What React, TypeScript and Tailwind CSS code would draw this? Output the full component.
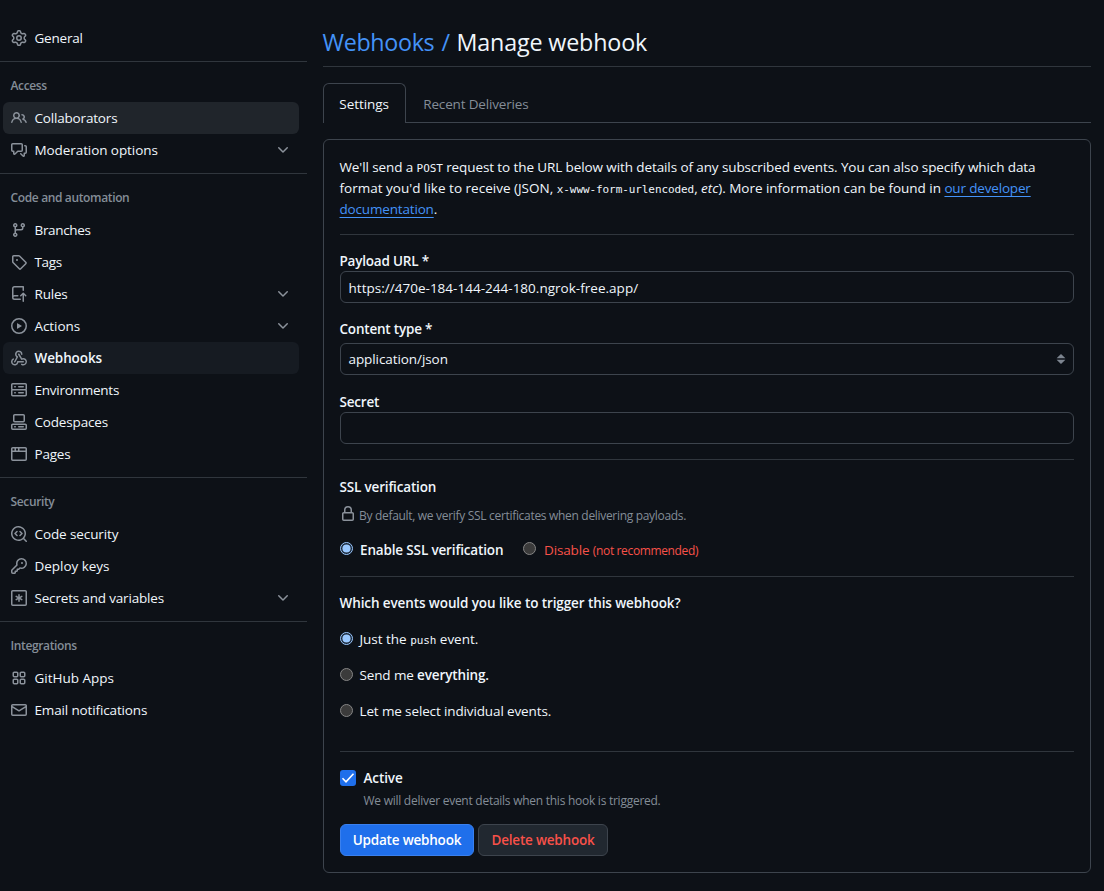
import React from "react";

const icons = {
  gear: "M8 0a8.2 8.2 0 0 1 .701.031C9.444.095 9.99.645 10.16 1.29l.288 1.107c.018.066.079.158.212.224.231.114.454.243.668.386.123.082.233.09.299.071l1.103-.303c.644-.176 1.392.021 1.82.63.27.385.506.792.704 1.218.315.675.111 1.422-.364 1.891l-.814.806c-.049.048-.098.147-.088.294.016.257.016.515 0 .772-.01.147.038.246.088.294l.814.806c.475.469.679 1.216.364 1.891a7.977 7.977 0 0 1-.704 1.217c-.428.61-1.176.807-1.82.63l-1.102-.302c-.067-.019-.177-.011-.3.071a5.909 5.909 0 0 1-.668.386c-.133.066-.194.158-.211.224l-.29 1.106c-.168.646-.715 1.196-1.458 1.26a8.006 8.006 0 0 1-1.402 0c-.743-.064-1.289-.614-1.458-1.26l-.289-1.106c-.018-.066-.079-.158-.212-.224a5.738 5.738 0 0 1-.668-.386c-.123-.082-.233-.09-.299-.071l-1.103.303c-.644.176-1.392-.021-1.82-.63a8.12 8.12 0 0 1-.704-1.218c-.315-.675-.111-1.422.363-1.891l.815-.806c.05-.048.098-.147.088-.294a6.214 6.214 0 0 1 0-.772c.01-.147-.038-.246-.088-.294l-.815-.806C.635 6.045.431 5.298.746 4.623a7.92 7.92 0 0 1 .704-1.217c.428-.61 1.176-.807 1.82-.63l1.102.302c.067.019.177.011.3-.071.214-.143.437-.272.668-.386.133-.066.194-.158.211-.224l.29-1.106C6.009.645 6.556.095 7.299.03 7.53.01 7.764 0 8 0Zm-.571 1.525c-.036.003-.108.036-.137.146l-.289 1.105c-.147.561-.549.967-.998 1.189-.173.086-.34.183-.5.29-.417.278-.97.423-1.529.27l-1.103-.303c-.109-.03-.175.016-.195.045-.22.312-.412.644-.573.99-.014.031-.021.11.059.19l.815.806c.411.406.562.957.53 1.456a4.709 4.709 0 0 0 0 .582c.032.499-.119 1.05-.53 1.456l-.815.806c-.081.08-.073.159-.059.19.162.346.353.677.573.989.02.03.085.076.195.046l1.102-.303c.56-.153 1.113-.008 1.53.27.161.107.328.204.501.29.447.222.85.629.997 1.189l.289 1.105c.029.109.101.143.137.146a6.6 6.6 0 0 0 1.142 0c.036-.003.108-.036.137-.146l.289-1.105c.147-.561.549-.967.998-1.189.173-.086.34-.183.5-.29.417-.278.97-.423 1.529-.27l1.103.303c.109.029.175-.016.195-.045.22-.313.411-.644.573-.99.014-.031.021-.11-.059-.19l-.815-.806c-.411-.406-.562-.957-.53-1.456a4.709 4.709 0 0 0 0-.582c-.032-.499.119-1.05.53-1.456l.815-.806c.081-.08.073-.159.059-.19a6.464 6.464 0 0 0-.573-.989c-.02-.03-.085-.076-.195-.046l-1.102.303c-.56.153-1.113.008-1.53-.27a4.44 4.44 0 0 0-.501-.29c-.447-.222-.85-.629-.997-1.189l-.289-1.105c-.029-.11-.101-.143-.137-.146a6.6 6.6 0 0 0-1.142 0ZM11 8a3 3 0 1 1-6 0 3 3 0 0 1 6 0ZM9.5 8a1.5 1.5 0 1 0-3.001.001A1.5 1.5 0 0 0 9.5 8Z",
  people:
    "M2 5.5a3.5 3.5 0 1 1 5.898 2.549 5.508 5.508 0 0 1 3.034 4.084.75.75 0 1 1-1.482.235 4 4 0 0 0-7.9 0 .75.75 0 0 1-1.482-.236A5.507 5.507 0 0 1 3.102 8.05 3.493 3.493 0 0 1 2 5.5ZM11 4a3.001 3.001 0 0 1 2.22 5.018 5.01 5.01 0 0 1 2.56 3.012.749.749 0 0 1-.885.954.752.752 0 0 1-.549-.514 3.507 3.507 0 0 0-2.522-2.372.75.75 0 0 1-.574-.73v-.352a.75.75 0 0 1 .416-.672A1.5 1.5 0 0 0 11 5.5.75.75 0 0 1 11 4Zm-5.5-.5a2 2 0 1 0-.001 3.999A2 2 0 0 0 5.5 3.5Z",
  discussion:
    "M1.75 1h8.5c.966 0 1.75.784 1.75 1.75v5.5A1.75 1.75 0 0 1 10.25 10H7.061l-2.574 2.573A1.458 1.458 0 0 1 2 11.543V10h-.25A1.75 1.75 0 0 1 0 8.25v-5.5C0 1.784.784 1 1.75 1ZM1.5 2.75v5.5c0 .138.112.25.25.25h1a.75.75 0 0 1 .75.75v2.19l2.72-2.72a.749.749 0 0 1 .53-.22h3.5a.25.25 0 0 0 .25-.25v-5.5a.25.25 0 0 0-.25-.25h-8.5a.25.25 0 0 0-.25.25Zm13 2a.25.25 0 0 0-.25-.25h-.5a.75.75 0 0 1 0-1.5h.5c.966 0 1.75.784 1.75 1.75v5.5A1.75 1.75 0 0 1 14.25 12H14v1.543a1.458 1.458 0 0 1-2.487 1.03L9.22 12.28a.749.749 0 0 1 .326-1.275.749.749 0 0 1 .734.215l2.22 2.22v-2.19a.75.75 0 0 1 .75-.75h1a.25.25 0 0 0 .25-.25Z",
  branch:
    "M9.5 3.25a2.25 2.25 0 1 1 3 2.122V6A2.5 2.5 0 0 1 10 8.5H6a1 1 0 0 0-1 1v1.128a2.251 2.251 0 1 1-1.5 0V5.372a2.25 2.25 0 1 1 1.5 0v1.836A2.493 2.493 0 0 1 6 7h4a1 1 0 0 0 1-1v-.628A2.25 2.25 0 0 1 9.5 3.25Zm-6 0a.75.75 0 1 0 1.5 0 .75.75 0 0 0-1.5 0Zm8.25-.75a.75.75 0 1 0 0 1.5.75.75 0 0 0 0-1.5ZM4.25 12a.75.75 0 1 0 0 1.5.75.75 0 0 0 0-1.5Z",
  tag: "M1 7.775V2.75C1 1.784 1.784 1 2.75 1h5.025c.464 0 .91.184 1.238.513l6.25 6.25a1.75 1.75 0 0 1 0 2.474l-5.026 5.026a1.75 1.75 0 0 1-2.474 0l-6.25-6.25A1.752 1.752 0 0 1 1 7.775Zm1.5 0c0 .066.026.13.073.177l6.25 6.25a.25.25 0 0 0 .354 0l5.025-5.025a.25.25 0 0 0 0-.354l-6.25-6.25a.25.25 0 0 0-.177-.073H2.75a.25.25 0 0 0-.25.25ZM6 5a1 1 0 1 1 0 2 1 1 0 0 1 0-2Z",
  rules:
    "M1 2.5A2.5 2.5 0 0 1 3.5 0h8.75a.75.75 0 0 1 .75.75v3.5a.75.75 0 0 1-1.5 0V1.5h-8a1 1 0 0 0-1 1v6.708A2.493 2.493 0 0 1 3.5 9h3.25a.75.75 0 0 1 0 1.5H3.5a1 1 0 0 0 0 2h5.75a.75.75 0 0 1 0 1.5H3.5A2.5 2.5 0 0 1 1 11.5Zm13.23 7.79-.001-.001-1.224-1.224v6.184a.75.75 0 0 1-1.5 0V9.066L10.28 10.29a.75.75 0 0 1-1.06-1.061l2.505-2.504a.75.75 0 0 1 1.06 0L15.29 9.23a.751.751 0 0 1-.018 1.042.751.751 0 0 1-1.042.018Z",
  play: "M8 0a8 8 0 1 1 0 16A8 8 0 0 1 8 0ZM1.5 8a6.5 6.5 0 1 0 13 0 6.5 6.5 0 0 0-13 0Zm4.879-2.773 4.264 2.559a.25.25 0 0 1 0 .428l-4.264 2.559A.25.25 0 0 1 6 10.559V5.442a.25.25 0 0 1 .379-.215Z",
  webhook:
    "M5.5 4.25a2.25 2.25 0 0 1 4.5 0 .75.75 0 0 0 1.5 0 3.75 3.75 0 1 0-6.14 2.889l-2.272 4.258a.75.75 0 0 0 1.324.706L7 7.25a.75.75 0 0 0-.309-1.015A2.25 2.25 0 0 1 5.5 4.25Z M7.364 3.607a.75.75 0 0 1 1.03.257l2.608 4.349a3.75 3.75 0 1 1-.628 6.785.75.75 0 0 1 .752-1.299 2.25 2.25 0 1 0-.033-3.88.75.75 0 0 1-1.03-.256L7.107 4.636a.75.75 0 0 1 .257-1.03Z M2.9 8.776A.75.75 0 0 1 2.625 9.8 2.25 2.25 0 1 0 6 11.75a.75.75 0 0 1 .75-.751h5.5a.75.75 0 0 1 0 1.5H7.425a3.751 3.751 0 1 1-5.55-3.998.75.75 0 0 1 1.024.274Z",
  server:
    "M1.75 1h12.5c.966 0 1.75.784 1.75 1.75v4c0 .372-.116.717-.314 1 .198.283.314.628.314 1v4a1.75 1.75 0 0 1-1.75 1.75H1.75A1.75 1.75 0 0 1 0 12.75v-4c0-.358.109-.707.314-1a1.739 1.739 0 0 1-.314-1v-4C0 1.784.784 1 1.75 1ZM1.5 2.75v4c0 .138.112.25.25.25h12.5a.25.25 0 0 0 .25-.25v-4a.25.25 0 0 0-.25-.25H1.75a.25.25 0 0 0-.25.25Zm.25 5.75a.25.25 0 0 0-.25.25v4c0 .138.112.25.25.25h12.5a.25.25 0 0 0 .25-.25v-4a.25.25 0 0 0-.25-.25ZM7 4.75A.75.75 0 0 1 7.75 4h4.5a.75.75 0 0 1 0 1.5h-4.5A.75.75 0 0 1 7 4.75ZM7.75 10h4.5a.75.75 0 0 1 0 1.5h-4.5a.75.75 0 0 1 0-1.5ZM3 4.75A.75.75 0 0 1 3.75 4h.5a.75.75 0 0 1 0 1.5h-.5A.75.75 0 0 1 3 4.75ZM3.75 10h.5a.75.75 0 0 1 0 1.5h-.5a.75.75 0 0 1 0-1.5Z",
  codespaces:
    "M0 11.25c0-.966.784-1.75 1.75-1.75h12.5c.966 0 1.75.784 1.75 1.75v3A1.75 1.75 0 0 1 14.25 16H1.75A1.75 1.75 0 0 1 0 14.25Zm2-9.5C2 .784 2.784 0 3.75 0h8.5C13.216 0 14 .784 14 1.75v5a1.75 1.75 0 0 1-1.75 1.75h-8.5A1.75 1.75 0 0 1 2 6.75Zm1.75-.25a.25.25 0 0 0-.25.25v5c0 .138.112.25.25.25h8.5a.25.25 0 0 0 .25-.25v-5a.25.25 0 0 0-.25-.25Zm-2 9.5a.25.25 0 0 0-.25.25v3c0 .138.112.25.25.25h12.5a.25.25 0 0 0 .25-.25v-3a.25.25 0 0 0-.25-.25Z M7 12.75a.75.75 0 0 1 .75-.75h4.5a.75.75 0 0 1 0 1.5h-4.5a.75.75 0 0 1-.75-.75Zm-4 0a.75.75 0 0 1 .75-.75h.5a.75.75 0 0 1 0 1.5h-.5a.75.75 0 0 1-.75-.75Z",
  browser:
    "M0 2.75C0 1.784.784 1 1.75 1h12.5c.966 0 1.75.784 1.75 1.75v10.5A1.75 1.75 0 0 1 14.25 15H1.75A1.75 1.75 0 0 1 0 13.25ZM14.5 6h-13v7.25c0 .138.112.25.25.25h12.5a.25.25 0 0 0 .25-.25Zm-6-3.5v2h6V2.75a.25.25 0 0 0-.25-.25ZM5 2.5v2h2v-2Zm-3.25 0a.25.25 0 0 0-.25.25V4.5h2v-2Z",
  codescan:
    "M8.47 4.97a.75.75 0 0 0 0 1.06L9.94 7.5 8.47 8.97a.75.75 0 1 0 1.06 1.06l2-2a.75.75 0 0 0 0-1.06l-2-2a.75.75 0 0 0-1.06 0ZM6.53 6.03a.75.75 0 0 0-1.06-1.06l-2 2a.75.75 0 0 0 0 1.06l2 2a.75.75 0 1 0 1.06-1.06L5.06 7.5l1.47-1.47Z M12.246 13.307a7.501 7.501 0 1 1 1.06-1.06l2.474 2.473a.75.75 0 1 1-1.06 1.06l-2.474-2.473ZM1.5 7.5a6.002 6.002 0 0 0 3.608 5.504 6.002 6.002 0 0 0 6.486-1.117.748.748 0 0 1 .292-.293A6 6 0 1 0 1.5 7.5Z",
  key: "M10.5 0a5.499 5.499 0 1 1-1.288 10.848l-.932.932a.749.749 0 0 1-.53.22H7v.75a.749.749 0 0 1-.22.53l-.5.5a.749.749 0 0 1-.53.22H5v.75a.749.749 0 0 1-.22.53l-.5.5a.749.749 0 0 1-.53.22h-2A1.75 1.75 0 0 1 0 14.25v-2c0-.199.079-.389.22-.53l4.932-4.932A5.5 5.5 0 0 1 10.5 0Zm-4 5.5c-.001.431.069.86.205 1.269a.75.75 0 0 1-.181.768L1.5 12.56v1.69c0 .138.112.25.25.25h1.69l.06-.06v-1.19a.75.75 0 0 1 .75-.75h1.19l.06-.06v-1.19a.75.75 0 0 1 .75-.75h1.19l1.023-1.025a.75.75 0 0 1 .768-.18A4 4 0 1 0 6.5 5.5ZM11 6a1 1 0 1 1 0-2 1 1 0 0 1 0 2Z",
  asterisk:
    "M1.75 0h12.5C15.216 0 16 .784 16 1.75v12.5A1.75 1.75 0 0 1 14.25 16H1.75A1.75 1.75 0 0 1 0 14.25V1.75C0 .784.784 0 1.75 0ZM1.5 1.75v12.5c0 .138.112.25.25.25h12.5a.25.25 0 0 0 .25-.25V1.75a.25.25 0 0 0-.25-.25H1.75a.25.25 0 0 0-.25.25Z M8 4a.75.75 0 0 1 .75.75V6.7l1.69-.975a.75.75 0 0 1 .75 1.3L9.5 8l1.69.976a.75.75 0 0 1-.75 1.298L8.75 9.3v1.951a.75.75 0 0 1-1.5 0V9.299l-1.69.976a.75.75 0 0 1-.75-1.3L6.5 8l-1.69-.975a.75.75 0 0 1 .75-1.3l1.69.976V4.75A.75.75 0 0 1 8 4Z",
  apps: "M1.5 3.25c0-.966.784-1.75 1.75-1.75h2.5c.966 0 1.75.784 1.75 1.75v2.5A1.75 1.75 0 0 1 5.75 7.5h-2.5A1.75 1.75 0 0 1 1.5 5.75Zm7 0c0-.966.784-1.75 1.75-1.75h2.5c.966 0 1.75.784 1.75 1.75v2.5a1.75 1.75 0 0 1-1.75 1.75h-2.5A1.75 1.75 0 0 1 8.5 5.75Zm-7 7c0-.966.784-1.75 1.75-1.75h2.5c.966 0 1.75.784 1.75 1.75v2.5a1.75 1.75 0 0 1-1.75 1.75h-2.5a1.75 1.75 0 0 1-1.75-1.75Zm7 0c0-.966.784-1.75 1.75-1.75h2.5c.966 0 1.75.784 1.75 1.75v2.5a1.75 1.75 0 0 1-1.75 1.75h-2.5a1.75 1.75 0 0 1-1.75-1.75ZM3.25 3a.25.25 0 0 0-.25.25v2.5c0 .138.112.25.25.25h2.5A.25.25 0 0 0 6 5.75v-2.5A.25.25 0 0 0 5.75 3Zm7 0a.25.25 0 0 0-.25.25v2.5c0 .138.112.25.25.25h2.5a.25.25 0 0 0 .25-.25v-2.5a.25.25 0 0 0-.25-.25Zm-7 7a.25.25 0 0 0-.25.25v2.5c0 .138.112.25.25.25h2.5a.25.25 0 0 0 .25-.25v-2.5a.25.25 0 0 0-.25-.25Zm7 0a.25.25 0 0 0-.25.25v2.5c0 .138.112.25.25.25h2.5a.25.25 0 0 0 .25-.25v-2.5a.25.25 0 0 0-.25-.25Z",
  mail: "M1.75 2h12.5c.966 0 1.75.784 1.75 1.75v8.5A1.75 1.75 0 0 1 14.25 14H1.75A1.75 1.75 0 0 1 0 12.25v-8.5C0 2.784.784 2 1.75 2ZM1.5 12.251c0 .138.112.25.25.25h12.5a.25.25 0 0 0 .25-.25V5.809L8.38 9.397a.75.75 0 0 1-.76 0L1.5 5.809v6.442Zm13-8.181v-.32a.25.25 0 0 0-.25-.25H1.75a.25.25 0 0 0-.25.25v.32L8 7.88Z",
  lock: "M4 4a4 4 0 0 1 8 0v2h.25c.966 0 1.75.784 1.75 1.75v5.5A1.75 1.75 0 0 1 12.25 15h-8.5A1.75 1.75 0 0 1 2 13.25v-5.5C2 6.784 2.784 6 3.75 6H4Zm8.25 3.5h-8.5a.25.25 0 0 0-.25.25v5.5c0 .138.112.25.25.25h8.5a.25.25 0 0 0 .25-.25v-5.5a.25.25 0 0 0-.25-.25ZM10.5 6V4a2.5 2.5 0 1 0-5 0v2Z",
  chevron:
    "M12.78 5.22a.749.749 0 0 1 0 1.06l-4.25 4.25a.749.749 0 0 1-1.06 0L3.22 6.28a.749.749 0 1 1 1.06-1.06L8 8.939l3.72-3.719a.749.749 0 0 1 1.06 0Z",
};

type IconName = keyof typeof icons;

function Icon({ name }: { name: IconName }) {
  return (
    <svg viewBox="0 0 16 16" className="size-4 shrink-0 fill-[#8b929b]">
      <path fillRule="evenodd" d={icons[name]} />
    </svg>
  );
}

type Item = {
  icon: IconName;
  label: string;
  track: string;
  expandable?: boolean;
  state?: "hover" | "current";
};

const groups: { title?: string; items: Item[] }[] = [
  { items: [{ icon: "gear", label: "General", track: "tracking-[-0.2px]" }] },
  {
    title: "Access",
    items: [
      { icon: "people", label: "Collaborators", track: "tracking-[-0.18px]", state: "hover" },
      { icon: "discussion", label: "Moderation options", track: "tracking-[-0.08px]", expandable: true },
    ],
  },
  {
    title: "Code and automation",
    items: [
      { icon: "branch", label: "Branches", track: "tracking-[-0.33px]" },
      { icon: "tag", label: "Tags", track: "tracking-[-0.35px]" },
      { icon: "rules", label: "Rules", track: "tracking-[-0.2px]", expandable: true },
      { icon: "play", label: "Actions", track: "tracking-[-0.08px]", expandable: true },
      { icon: "webhook", label: "Webhooks", track: "tracking-[-0.1px]", state: "current" },
      { icon: "server", label: "Environments", track: "tracking-[-0.24px]" },
      { icon: "codespaces", label: "Codespaces", track: "tracking-[-0.17px]" },
      { icon: "browser", label: "Pages", track: "tracking-[-0.2px]" },
    ],
  },
  {
    title: "Security",
    items: [
      { icon: "codescan", label: "Code security", track: "tracking-[-0.1px]" },
      { icon: "key", label: "Deploy keys", track: "tracking-[-0.04px]" },
      { icon: "asterisk", label: "Secrets and variables", track: "tracking-[-0.18px]", expandable: true },
    ],
  },
  {
    title: "Integrations",
    items: [
      { icon: "apps", label: "GitHub Apps", track: "tracking-[0px]" },
      { icon: "mail", label: "Email notifications", track: "tracking-[-0.14px]" },
    ],
  },
];

function Sidebar() {
  return (
    <nav className="w-[307px] shrink-0 pt-[22px]">
      {groups.map((group, i) => (
        <section key={i} className={i > 0 ? "mt-[7px] border-t border-[#30363d]" : ""}>
          {group.title && (
            <h2 className="flex h-10 items-center pt-1.5 pl-[10.5px] text-[12px] font-semibold tracking-[-0.36px] text-[#848d97]">
              {group.title}
            </h2>
          )}
          <ul className="pr-2 pl-[3px]">
            {group.items.map((item) => (
              <li
                key={item.label}
                className={`flex h-8 items-center rounded-md px-2 ${
                  item.state === "hover" ? "bg-[#20252b]" : item.state === "current" ? "bg-[#161b22]" : ""
                }`}
              >
                <Icon name={item.icon} />
                <span className={`ml-[7.5px] flex-1 ${item.state === "current" ? "font-semibold" : ""} ${item.track}`}>
                  {item.label}
                </span>
                {item.expandable && <Icon name="chevron" />}
              </li>
            ))}
          </ul>
        </section>
      ))}
    </nav>
  );
}

function Radio({ checked = false }: { checked?: boolean }) {
  return checked ? (
    <svg viewBox="0 0 13 13" className="-mt-[3px] size-[13px] shrink-0">
      <circle cx="6.5" cy="6.5" r="6" className="fill-[#1b2838] stroke-[#99c8ff]" />
      <circle cx="6.5" cy="6.5" r="4.1" className="fill-[#99c8ff]" />
    </svg>
  ) : (
    <span className="-mt-[3px] size-[13px] shrink-0 rounded-full border border-[#858585] bg-[#3b3b3b]" />
  );
}

function Mono({ children }: { children: React.ReactNode }) {
  return (
    <code className="font-['DejaVu_Sans_Mono','Liberation_Mono',monospace] text-[11px] leading-none tracking-[-0.08px]">
      {children}
    </code>
  );
}

const field = "flex h-8 items-center rounded-md border border-[#3d444d] px-[7.5px]";
const link = "text-[#4493f8] tracking-[-0.17px] underline underline-offset-[3px]";

export default function App() {
  return (
    <div className="flex h-[891px] w-[1104px] overflow-hidden bg-[#0d1117] font-['Open_Sans','Noto_Sans',sans-serif] text-[13.5px] leading-[21px] whitespace-nowrap text-[#f0f6fc]">
      <Sidebar />
      <main className="ml-4 w-[768px] pt-[22px]">
        <h1 className="flex h-[45px] items-center border-b border-[#30363d] pb-1 text-[23.3px]">
          <span className="-ml-[0.5px] tracking-[-0.33px] text-[#4493f8]">Webhooks</span>
          <span className="ml-[7px] text-[#4493f8]">/</span>
          <span className="ml-[6.5px] tracking-[-0.15px]">Manage webhook</span>
        </h1>

        <div className="mt-4 flex h-10">
          <div className="flex w-[83px] items-center rounded-t-md border border-b-0 border-[#3d444d] pt-[2px] pl-[15.3px] tracking-[-0.05px]">
            Settings
          </div>
          <div className="flex flex-1 items-center border-b border-[#3d444d] pt-[3px] pl-[17.3px] tracking-[-0.17px] text-[#848d97]">
            Recent Deliveries
          </div>
        </div>

        <form className="mt-4 h-[734px] rounded-md border border-[#3d444d] px-4 pt-[17px]">
          <div className="h-[78px] border-b border-[#30363d]">
            <div className="-ml-[0.5px] tracking-[-0.1px]">
              <p>
                We'll send a <Mono>POST</Mono> request to the URL below with details of any subscribed events. You can also specify which data
              </p>
              <p>
                <span className="tracking-[0.01px]">format you'd like to receive (JSON, </span>
                <Mono>x-www-form-urlencoded</Mono>
                <span className="tracking-[-0.03px]">
                  , <em>etc</em>). More information can be found in{" "}
                </span>
                <a className={link}>our developer</a>
              </p>
              <p>
                <a className={link}>documentation</a>.
              </p>
            </div>
          </div>

          <div className="h-[225px] border-b border-[#30363d] pt-4">
            <label className="-ml-[0.5px] block h-5 font-semibold tracking-[-0.2px]">Payload URL *</label>
            <div className={field}>
              <span className="pt-[2px] tracking-[0.02px]">https://470e-184-144-244-180.ngrok-free.app/</span>
            </div>
            <label className="mt-4 -ml-[0.5px] block h-6 font-semibold tracking-[-0.2px]">Content type *</label>
            <div className={`${field} justify-between`}>
              <span className="tracking-[-0.08px]">application/json</span>
              <svg viewBox="0 0 10 10" className="mr-[-0.5px] size-[10px] fill-[#7d8590]">
                <path d="M5 0 9.4 4.2H.6ZM.6 5.8h8.8L5 10Z" />
              </svg>
            </div>
            <label className="mt-[17px] -ml-[0.5px] block h-5 font-semibold tracking-[-0.2px]">Secret</label>
            <div className={field} />
          </div>

          <div className="h-[117px] border-b border-[#30363d] pt-[17px]">
            <h3 className="-ml-[0.5px] font-semibold tracking-[-0.17px]">SSL verification</h3>
            <p className="mt-[6px] flex h-[21px] items-center text-[12px] tracking-[-0.31px] text-[#848d97]">
              <span className="-mt-[2px]">
                <Icon name="lock" />
              </span>
              <span className="ml-[3px] pt-px">By default, we verify SSL certificates when delivering payloads.</span>
            </p>
            <div className="mt-[15px] flex h-[21px] items-center">
              <span className="-mt-px flex">
                <Radio checked />
              </span>
              <span className="ml-[7px] w-[143px] font-semibold tracking-[-0.15px]">Enable SSL verification</span>
              <span className="-mt-px ml-5 flex">
                <Radio />
              </span>
              <span className="ml-2 tracking-[-0.13px] text-[#f85149]">
                Disable <small className="text-[12px] tracking-[-0.36px]">(not recommended)</small>
              </span>
            </div>
          </div>

          <div className="h-[175px] border-b border-[#30363d] pt-4">
            <h3 className="-ml-[0.5px] font-semibold tracking-[-0.1px]">Which events would you like to trigger this webhook?</h3>
            <div className="mt-[15px] flex flex-col gap-[15px]">
              <label className="flex h-[21px] items-center">
                <Radio checked />
                <span className="ml-[6.5px] tracking-[-0.02px]">
                  Just the <Mono>push</Mono> event.
                </span>
              </label>
              <label className="flex h-[21px] items-center">
                <Radio />
                <span className="ml-[6.5px] tracking-[-0.13px]">
                  Send me <b className="font-semibold">everything.</b>
                </span>
              </label>
              <label className="flex h-[21px] items-center">
                <Radio />
                <span className="ml-[6.5px] tracking-[-0.13px]">Let me select individual events.</span>
              </label>
            </div>
          </div>

          <div className="flex pt-4">
            <span className="mt-[2px] flex size-4 items-center justify-center rounded-[3px] bg-[#1f6feb]">
              <svg viewBox="0 0 16 16" className="size-4 fill-none stroke-white stroke-[1.6]">
                <path d="M2.5 8.3 6 11.8 13.5 3.8" />
              </svg>
            </span>
            <div className="ml-[7.5px]">
              <div className="font-semibold tracking-[-0.1px]">Active</div>
              <p className="mt-px text-[12px] tracking-[-0.26px] text-[#848d97]">
                We will deliver event details when this hook is triggered.
              </p>
            </div>
          </div>
          <div className="mt-[13px] flex gap-1 font-semibold">
            <button type="button" className="h-8 w-[134px] rounded-md border border-[#3a80ee] bg-[#1f6feb] pt-px tracking-[-0.2px] text-white">
              Update webhook
            </button>
            <button type="button" className="h-8 w-[130px] rounded-md border border-[#3d444d] bg-[#212830] pt-px tracking-[-0.2px] text-[#f85149]">
              Delete webhook
            </button>
          </div>
        </form>
      </main>
    </div>
  );
}
